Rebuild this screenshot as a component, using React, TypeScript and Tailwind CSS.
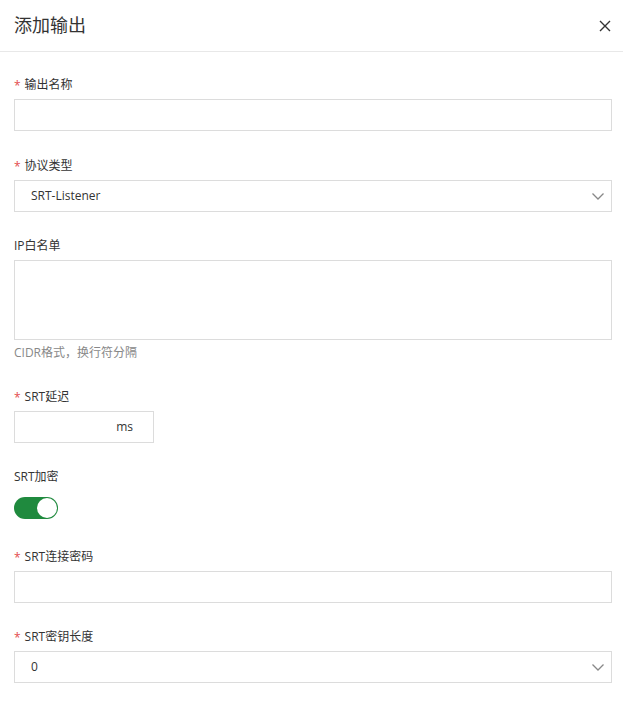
import React from "react";

const font = { fontFamily: '"Open Sans", "Noto Sans CJK SC", sans-serif' };

const Label = ({ text, required }: { text: string; required?: boolean }) => (
    <div className="h-[20px] flex items-center text-[12px] text-[#333] mb-[4px]">
        {required && <span className="text-[#e34d4d] mr-[4px] relative top-[1px]">*</span>}
        <span>{text}</span>
    </div>
);

const Chevron = () => (
    <svg width="14" height="14" viewBox="0 0 14 14" fill="none" className="text-[#888]">
        <path d="M1.5 4.5 L7 10 L12.5 4.5" stroke="currentColor" strokeWidth="1.3" />
    </svg>
);

const SelectBox = ({ value }: { value: string }) => (
    <div className="h-[32px] border border-[#dcdcdc] flex items-center justify-between pl-[16px] pr-[6px] text-[12px] text-[#333]">
        <span>{value}</span>
        <Chevron />
    </div>
);

export default function App() {
    return (
        <div className="w-[623px] h-[714px] bg-white overflow-hidden" style={font}>
            <div className="h-[52px] border-b border-[#e8e8e8] flex items-center justify-between pl-[14px] pr-[12px]">
                <span className="text-[18px] text-[#333]">添加输出</span>
                <svg width="12" height="12" viewBox="0 0 12 12" className="text-[#333]">
                    <path d="M1 1 L11 11 M11 1 L1 11" stroke="currentColor" strokeWidth="1.4" />
                </svg>
            </div>
            <div className="pl-[14px] pt-[23px] pr-[11px]">
                <div className="mb-[25px]">
                    <Label text="输出名称" required />
                    <div className="h-[32px] border border-[#dcdcdc]" />
                </div>
                <div className="mb-[24px]">
                    <Label text="协议类型" required />
                    <SelectBox value="SRT-Listener" />
                </div>
                <div className="mb-[24px]">
                    <Label text="IP白名单" />
                    <div className="h-[80px] border border-[#dcdcdc]" />
                    <div className="text-[12px] text-[#888] mt-[3px] h-[20px] flex items-center">CIDR格式，换行符分隔</div>
                </div>
                <div className="mb-[24px]">
                    <Label text="SRT延迟" required />
                    <div className="h-[32px] w-[140px] border border-[#dcdcdc] flex items-center justify-end pr-[20px] text-[12px] text-[#333]">
                        ms
                    </div>
                </div>
                <div className="mb-[28px]">
                    <Label text="SRT加密" />
                    <div className="pt-[6px]">
                        <div className="w-[44px] h-[22px] rounded-full bg-[#1f8a3e] flex items-center justify-end p-px">
                            <div className="w-[20px] h-[20px] rounded-full bg-white" />
                        </div>
                    </div>
                </div>
                <div className="mb-[24px]">
                    <Label text="SRT连接密码" required />
                    <div className="h-[32px] border border-[#dcdcdc]" />
                </div>
                <div>
                    <Label text="SRT密钥长度" required />
                    <SelectBox value="0" />
                </div>
            </div>
        </div>
    );
}
